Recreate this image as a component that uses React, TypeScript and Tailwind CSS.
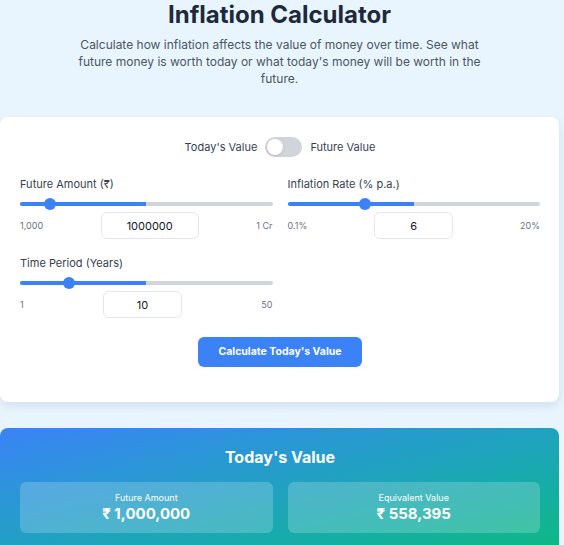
import { FC } from 'react'

const font = { fontFamily: 'Inter, "Noto Sans", sans-serif' }

const RangeField: FC<{
  label: string
  min: string
  max: string
  value: string
  thumb: number
  inputWidth: string
}> = ({ label, min, max, value, thumb, inputWidth }) => (
  <div className="flex flex-col">
    <label className="text-[11px] text-[#374151] leading-4">{label}</label>
    <div className="relative mt-[6px] h-3 flex items-center">
      <div className="h-[4px] w-full rounded-full bg-[#d1d5db] overflow-hidden">
        <div className="h-full w-1/2 bg-[#3b82f6]" />
      </div>
      <div
        className="absolute top-0 h-3 w-3 -ml-1.5 rounded-full bg-[#3b82f6]"
        style={{ left: `${thumb}%` }}
      />
    </div>
    <div className="mt-[2px] flex items-center justify-between">
      <span className="text-[9px] text-[#6b7280]">{min}</span>
      <input
        readOnly
        value={value}
        className={`${inputWidth} h-[27px] rounded-md border border-[#e5e7eb] text-center text-[11px] text-[#111827] outline-none`}
      />
      <span className="text-[9px] text-[#6b7280]">{max}</span>
    </div>
  </div>
)

export default function App() {
  return (
    <div className="min-h-[545px] w-[564px] bg-[#e9f5fe] pr-[5px]" style={font}>
      <div className="flex flex-col items-center pt-[1px]">
        <h1 className="text-[24px] font-bold leading-[28px] text-[#1e293b]">
          Inflation Calculator
        </h1>
        <p className="mt-[7px] max-w-[404px] text-center text-[12px] leading-[17px] text-[#4b5563]">
          Calculate how inflation affects the value of money over time. See what
          future money is worth today or what today's money will be worth in the
          future.
        </p>
      </div>

      <div className="mt-[30px] rounded-lg bg-white pl-5 pr-[19px] pt-[20px] pb-[35px] shadow-[0_4px_10px_rgba(30,64,120,0.12)]">
        <div className="flex items-center justify-center gap-2 text-[11px] text-[#374151]">
          <span>Today's Value</span>
          <span className="relative h-5 w-[37px] rounded-full bg-[#d1d5db]">
            <span className="absolute left-[2px] top-[2px] h-4 w-4 rounded-full bg-white shadow-sm" />
          </span>
          <span>Future Value</span>
        </div>

        <div className="mt-[19px] grid grid-cols-2 gap-x-[15px] gap-y-[16px]">
          <RangeField
            label="Future Amount (₹)"
            min="1,000"
            max="1 Cr"
            value="1000000"
            thumb={12}
            inputWidth="w-[98px]"
          />
          <RangeField
            label="Inflation Rate (% p.a.)"
            min="0.1%"
            max="20%"
            value="6"
            thumb={30.5}
            inputWidth="w-[79px]"
          />
          <RangeField
            label="Time Period (Years)"
            min="1"
            max="50"
            value="10"
            thumb={19.6}
            inputWidth="w-[79px]"
          />
        </div>

        <div className="mt-[19px] flex justify-center">
          <button className="h-[30px] w-[164px] rounded-md bg-[#3b82f6] text-[10.5px] font-bold text-white">
            Calculate Today's Value
          </button>
        </div>
      </div>

      <div className="mt-[26px] rounded-lg bg-gradient-to-br from-[#3b82f6] to-[#10b981] pl-5 pr-[19px] pt-[17px] pb-5">
        <h2 className="text-center text-[16px] font-bold leading-6 text-white">
          Today's Value
        </h2>
        <div className="mt-[13px] grid grid-cols-2 gap-[15px]">
          <div className="flex h-[51px] flex-col items-center justify-center rounded-md bg-white/20 text-white">
            <span className="text-[9px] leading-3">Future Amount</span>
            <span className="text-[15px] font-bold leading-5">₹ 1,000,000</span>
          </div>
          <div className="flex h-[51px] flex-col items-center justify-center rounded-md bg-white/20 text-white">
            <span className="text-[9px] leading-3">Equivalent Value</span>
            <span className="text-[15px] font-bold leading-5">₹ 558,395</span>
          </div>
        </div>
      </div>
    </div>
  )
}
